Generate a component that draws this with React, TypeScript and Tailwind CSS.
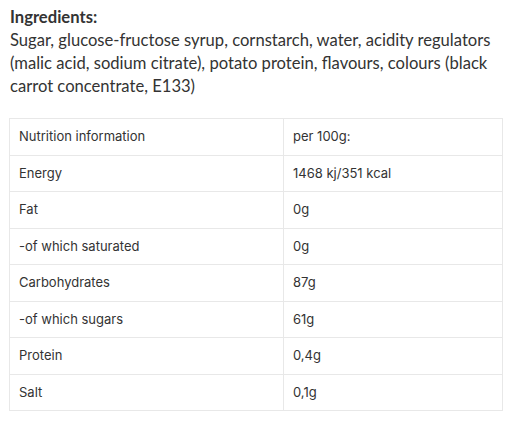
const rows = [
  ['Nutrition information', 'per 100g:'],
  ['Energy', '1468 kj/351 kcal'],
  ['Fat', '0g'],
  ['-of which saturated', '0g'],
  ['Carbohydrates', '87g'],
  ['-of which sugars', '61g'],
  ['Protein', '0,4g'],
  ['Salt', '0,1g'],
];

export default function App() {
  return (
    <div className="bg-white w-[526px] h-[430px] pl-[10px] pr-[22px] pt-[6px] text-[#333]">
      <div className="font-['Lato',sans-serif] text-[16.6px] leading-[23px] text-[#333] whitespace-nowrap">
        <p className="font-bold">Ingredients:</p>
        <p>
          Sugar, glucose-fructose syrup, cornstarch, water, acidity regulators
          <br />
          (malic acid, sodium citrate), potato protein, flavours, colours (black
          <br />
          carrot concentrate, E133)
        </p>
      </div>
      <table className="mt-[20px] -ml-px w-[494px] border-collapse border border-[#e8e8e8] font-['Inter',sans-serif] text-[13px] text-[#333]">
        <tbody>
          {rows.map(([label, value]) => (
            <tr key={label}>
              <td className="h-[36.5px] w-[274px] border border-[#e8e8e8] px-[9px] align-middle">{label}</td>
              <td className="h-[36.5px] border border-[#e8e8e8] px-[9px] align-middle">{value}</td>
            </tr>
          ))}
        </tbody>
      </table>
    </div>
  );
}
